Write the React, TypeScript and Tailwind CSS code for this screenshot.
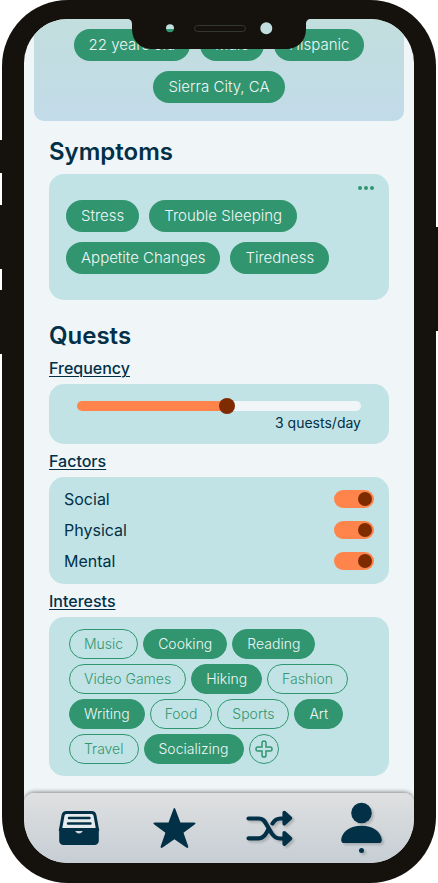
import { useState, type ReactNode } from "react";

const facts = ["22 years old", "Male", "Hispanic", "Sierra City, CA"];
const symptoms = ["Stress", "Trouble Sleeping", "Appetite Changes", "Tiredness"];
const factors = ["Social", "Physical", "Mental"];
const interests: { name: string; on: boolean }[] = [
  { name: "Music", on: false },
  { name: "Cooking", on: true },
  { name: "Reading", on: true },
  { name: "Video Games", on: false },
  { name: "Hiking", on: true },
  { name: "Fashion", on: false },
  { name: "Writing", on: true },
  { name: "Food", on: false },
  { name: "Sports", on: false },
  { name: "Art", on: true },
  { name: "Travel", on: false },
  { name: "Socializing", on: true },
];

function Tag({ children }: { children: ReactNode }) {
  return (
    <li className="flex h-8 items-center rounded-full bg-[#31966f] px-[15px] text-[15px] font-light text-[#f0f5f8]">
      {children}
    </li>
  );
}

function Title({ children }: { children: ReactNode }) {
  return <h2 className="text-2xl leading-[31px] font-semibold">{children}</h2>;
}

function Subtitle({ children, id }: { children: ReactNode; id: string }) {
  return (
    <h3 id={id} className="mt-[5px] mb-1 text-base leading-6 font-medium underline decoration-1 underline-offset-2">
      {children}
    </h3>
  );
}

function Frequency() {
  const [position, setPosition] = useState(53);
  return (
    <div className="rounded-[15px] bg-[#c1e3e5] px-7 pt-3.5 pb-3">
      <input
        type="range"
        min={0}
        max={100}
        value={position}
        aria-labelledby="frequency"
        onChange={(e) => setPosition(Number(e.target.value))}
        style={{ ["--fill" as string]: `${position}%` }}
        className="block h-4 w-full appearance-none bg-transparent [&::-webkit-slider-runnable-track]:h-2.5 [&::-webkit-slider-runnable-track]:rounded-full [&::-webkit-slider-runnable-track]:bg-[linear-gradient(to_right,#ff844b_var(--fill),#f0f5f8_var(--fill))] [&::-webkit-slider-thumb]:-mt-[3px] [&::-webkit-slider-thumb]:size-4 [&::-webkit-slider-thumb]:appearance-none [&::-webkit-slider-thumb]:rounded-full [&::-webkit-slider-thumb]:bg-[#7f2b00]"
      />
      <p className="text-right text-sm leading-[18px]">{Math.round((position / 100) * 6)} quests/day</p>
    </div>
  );
}

function Factor({ name }: { name: string }) {
  return (
    <label className="flex h-[31px] items-center justify-between text-base">
      {name}
      <input
        type="checkbox"
        role="switch"
        defaultChecked
        className="flex h-[18px] w-10 appearance-none items-center rounded-full bg-[#9bb8bb] px-0.5 before:size-3.5 before:rounded-full before:bg-[#7f2b00] checked:justify-end checked:bg-[#ff844b]"
      />
    </label>
  );
}

function Interest({ name, on }: { name: string; on: boolean }) {
  const [picked, setPicked] = useState(on);
  const look = picked ? "bg-[#31966f] text-[#f0f5f8]" : "text-[#31966f]";
  return (
    <button
      type="button"
      aria-pressed={picked}
      onClick={() => setPicked(!picked)}
      className={`h-[30px] rounded-full border border-[#31966f] px-3.5 text-sm font-light ${look}`}
    >
      {name}
    </button>
  );
}

function TabButton({ label, active, children }: { label: string; active?: boolean; children: ReactNode }) {
  return (
    <button
      type="button"
      aria-label={label}
      aria-current={active ? "page" : undefined}
      className="flex h-[70px] w-[46px] items-center justify-center"
    >
      {children}
    </button>
  );
}

function TabBar() {
  return (
    <nav className="relative flex justify-between rounded-t-[10px] bg-linear-to-b from-[#dfe0e1] to-[#c6ced4] pr-7 pl-8 text-[#023047] shadow-[0_-1px_4px_rgba(0,0,0,0.45)]">
      <TabButton label="Inbox">
        <svg viewBox="0 0 46 70" className="h-[70px] w-[46px]" fill="none">
          <path d="M10.5 19.5h25q3 0 3.500 3l2.500 14H4.500l2.500-14q.5-3 3.500-3z" fill="#e6ebed" stroke="currentColor" strokeWidth="3" />
          <path d="M13 25h20.500M12 30.500h22.500" stroke="currentColor" strokeWidth="2.400" strokeLinecap="round" />
          <path d="M3.200 35h14.300c1.200 0 1 1 1.500 2.500 1.500 4 6.500 4 8 0 .5-1.500.3-2.500 1.500-2.500h14.300v12.500c0 2.800-1.700 4.500-4.500 4.500H7.700c-2.800 0-4.500-1.700-4.500-4.500z" fill="currentColor" />
        </svg>
      </TabButton>
      <TabButton label="Favorites">
        <svg viewBox="0 0 46 70" className="h-[70px] w-[46px]" fill="currentColor">
          <path d="M22.400 16.200q1-2.400 2 0l5 13.300h13.500q2.800.2.700 2L32.500 39.700l4.700 13.500q.5 2.700-1.900 1.400L23.400 46.300l-11.800 8.300q-2.400 1.300-1.900-1.400l4.700-13.500L3.300 31.500q-2.100-1.800.7-2h13.500z" />
        </svg>
      </TabButton>
      <TabButton label="Shuffle">
        <svg viewBox="0 0 46 70" className="h-[70px] w-[46px] overflow-visible drop-shadow-[2px_2px_1px_rgba(0,0,0,0.18)]" fill="none" stroke="currentColor" strokeWidth="4.200" strokeLinecap="round" strokeLinejoin="round">
          <path d="M3.500 25.500h10c4.500 0 6 2.500 8 6l5 8.500c2.500 4 4.500 5.500 8.500 5.500H43" />
          <path d="M3.500 45.300h10c4 0 6-2 8-5.500l1.800-3.200M27.500 30.500c2-3.500 4.500-5 8-5H43" />
          <path d="M39.300 19.700l6 5.500-6 5.500zM39.300 40l6 5.500-6 5.500z" fill="currentColor" strokeWidth="3.800" />
        </svg>
      </TabButton>
      <TabButton label="Profile" active>
        <svg viewBox="2 0 46 70" className="h-[70px] w-[46px] overflow-visible drop-shadow-[2px_2px_1px_rgba(0,0,0,0.18)]" fill="currentColor">
          <circle cx="23.500" cy="20" r="10.300" />
          <path d="M3.200 46.500C4 39 12 32.800 23.500 32.800S43 39 43.800 46.500q.2 3.500-3 3.500H6.200q-3.200 0-3-3.500z" />
          <circle cx="23.500" cy="57.500" r="2.500" />
        </svg>
      </TabButton>
    </nav>
  );
}

function Notch() {
  return (
    <svg
      aria-hidden="true"
      viewBox="0 0 184 30"
      className="pointer-events-none absolute top-[19px] left-1/2 h-[30px] w-[184px] -translate-x-1/2"
    >
      <path
        fillRule="evenodd"
        fill="#15120d"
        d="M0-1V0C3.500 0 5 2 5 5v5c0 12 8 20 20 20h134c12 0 20-8 20-20V5c0-3 1.500-5 5-5V-1zM39 9.300a4 4 0 1 0 8 0a4 4 0 1 0-8 0zM133.300 9.300a6 6 0 1 0 12 0a6 6 0 1 0-12 0z"
      />
      <rect x="67.500" y="6.500" width="51" height="6" rx="3" fill="none" stroke="#343632" />
    </svg>
  );
}

export default function App() {
  return (
    <main className="relative bg-white px-0.5 font-['Inter','Liberation_Sans',sans-serif] text-[#023047]">
      <span className="absolute top-[140px] left-0 h-[33px] w-1 bg-[#15120d]" />
      <span className="absolute top-[205px] left-0 h-16 w-1 bg-[#15120d]" />
      <span className="absolute top-[290px] left-0 h-16 w-1 bg-[#15120d]" />
      <span className="absolute top-[227px] right-0 h-[104px] w-1 bg-[#15120d]" />

      <div className="relative rounded-[66px] bg-[#15120d] px-[22px] pt-[19px] pb-5">
        <div className="overflow-hidden rounded-[44px] bg-[#f0f5f8]">
          <header className="mx-2.5 rounded-b-[10px] bg-linear-to-b from-[#c2dedd] to-[#c2dbe9] px-8 pt-2.5 pb-[18px]">
            <ul className="flex flex-wrap justify-center gap-2.5">
              {facts.map((fact) => (
                <Tag key={fact}>{fact}</Tag>
              ))}
            </ul>
          </header>

          <div className="px-[25px] pb-[17px]">
            <section className="pt-[15px]">
              <Title>Symptoms</Title>
              <div className="mt-[7px] rounded-[15px] bg-[#c1e3e5] px-[15px] pb-[26px]">
                <div className="flex justify-end">
                  <button type="button" aria-label="Edit symptoms" className="flex h-[26px] items-center gap-0.5 pt-0.5">
                    <span className="size-1 rounded-full bg-[#31966f]" />
                    <span className="size-1 rounded-full bg-[#31966f]" />
                    <span className="size-1 rounded-full bg-[#31966f]" />
                  </button>
                </div>
                <ul className="flex flex-wrap gap-2.5 px-0.5">
                  {symptoms.map((symptom) => (
                    <Tag key={symptom}>{symptom}</Tag>
                  ))}
                </ul>
              </div>
            </section>

            <section className="pt-5">
              <Title>Quests</Title>
              <Subtitle id="frequency">Frequency</Subtitle>
              <Frequency />

              <Subtitle id="factors">Factors</Subtitle>
              <div role="group" aria-labelledby="factors" className="rounded-[15px] bg-[#c1e3e5] px-[15px] pt-1.5 pb-2">
                {factors.map((name) => (
                  <Factor key={name} name={name} />
                ))}
              </div>

              <Subtitle id="interests">Interests</Subtitle>
              <div
                role="group"
                aria-labelledby="interests"
                className="flex flex-wrap gap-[5px] rounded-[15px] bg-[#c1e3e5] px-5 py-3"
              >
                {interests.map((interest) => (
                  <Interest key={interest.name} {...interest} />
                ))}
                <button
                  type="button"
                  aria-label="Add interest"
                  className="flex size-[30px] items-center justify-center rounded-full border border-[#31966f] text-[#31966f]"
                >
                  <svg viewBox="0 0 18 18" className="size-[18px]" fill="none" stroke="currentColor" strokeWidth="1.500">
                    <path d="M7 2.800q0-1.800 2-1.800t2 1.800V7h4.200Q17 7 17 9t-1.800 2H11v4.200Q11 17 9 17t-2-1.800V11H2.800Q1 11 1 9t1.800-2H7z" />
                  </svg>
                </button>
              </div>
            </section>
          </div>

          <TabBar />
        </div>
        <Notch />
      </div>
    </main>
  );
}
